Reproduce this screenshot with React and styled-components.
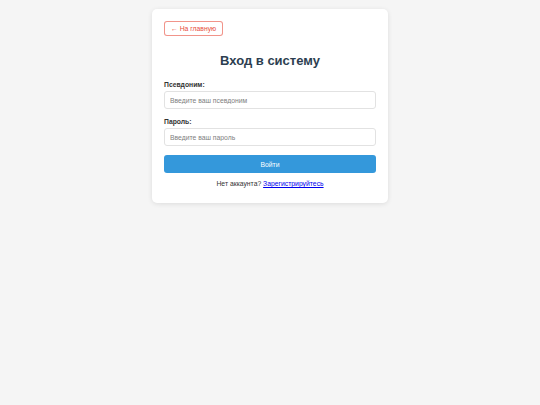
import React from "react";
import styled, { createGlobalStyle } from "styled-components";

const Global = createGlobalStyle`
  html, body { margin: 0; padding: 0; background: #f5f5f5; }
  body { font-family: "Liberation Sans", Arial, sans-serif; }
  * { box-sizing: border-box; }
`;

const Page = styled.div`
  min-height: 405px;
  padding-top: 9px;
  display: flex;
  justify-content: center;
  align-items: flex-start;
`;

const Card = styled.div`
  width: 236px;
  background: #fff;
  border-radius: 5px;
  box-shadow: 0 1px 5px rgba(0, 0, 0, 0.1);
  padding: 12px;
  display: flex;
  flex-direction: column;
`;

const BackButton = styled.button`
  align-self: flex-start;
  height: 15px;
  padding: 0 6px;
  border: 1px solid rgba(231, 76, 60, 0.6);
  border-radius: 3px;
  background: #fff;
  color: #e74c3c;
  font-family: inherit;
  font-size: 6.8px;
  line-height: 13px;
  cursor: pointer;
`;

const Title = styled.h2`
  margin: 17px 0 12px;
  text-align: center;
  color: #2c3e50;
  font-size: 13px;
  line-height: 16px;
  font-weight: bold;
`;

const Field = styled.div`
  display: flex;
  flex-direction: column;
  gap: 2px;
  margin-bottom: 9px;
`;

const Label = styled.label`
  font-size: 6.8px;
  line-height: 8px;
  font-weight: bold;
  color: #333;
`;

const Input = styled.input`
  width: 100%;
  height: 18px;
  padding: 0 5px;
  border: 1px solid #e2e2e2;
  border-radius: 3px;
  font-family: inherit;
  font-size: 6.8px;
  color: #333;
  outline: none;
  &::placeholder { color: #808080; }
`;

const Submit = styled.button`
  width: 100%;
  height: 18px;
  margin-top: 0;
  border: none;
  border-radius: 3px;
  background: #3498db;
  color: #fff;
  font-family: inherit;
  font-size: 6.8px;
  cursor: pointer;
`;

const Footer = styled.p`
  margin: 7px 0 3px;
  text-align: center;
  font-size: 6.8px;
  line-height: 8px;
  color: #333;
`;

const Link = styled.a`
  color: #0000ee;
  text-decoration: underline;
`;

export default function App() {
  return (
    <>
      <Global />
      <Page>
        <Card>
          <BackButton>← На главную</BackButton>
          <Title>Вход в систему</Title>
          <Field>
            <Label>Псевдоним:</Label>
            <Input placeholder="Введите ваш псевдоним" />
          </Field>
          <Field>
            <Label>Пароль:</Label>
            <Input type="password" placeholder="Введите ваш пароль" />
          </Field>
          <Submit>Войти</Submit>
          <Footer>
            Нет аккаунта? <Link href="#">Зарегистрируйтесь</Link>
          </Footer>
        </Card>
      </Page>
    </>
  );
}
